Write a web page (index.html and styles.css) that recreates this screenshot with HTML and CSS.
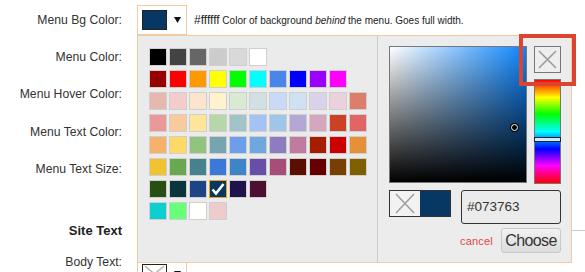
FILE: index.html
```html
<!DOCTYPE html>
<html>
<head>
  <title>Menu Settings</title>
  <link rel="stylesheet" href="styles.css">
</head>
<body>
  <div class="settings">

    <div class="row rowBg">
      <div class="lbl">Menu Bg Color:</div>
      <div class="field">
        <div class="colorBtn">
          <span class="btnSwatch" style="background:#073763"></span>
          <svg class="caret" width="7" height="6" viewBox="0 0 7 6"><polygon points="0,0 7,0 3.5,6" fill="#111"/></svg>
        </div>
        <span class="desc"><span class="hex">#ffffff</span> Color of background <em>behind</em> the menu. Goes full width.</span>

        <!-- color picker dropdown -->
        <div class="picker">
          <div class="palette">
            <div class="palRow">
              <span class="sw" style="background:#000000"></span>
              <span class="sw" style="background:#434343"></span>
              <span class="sw" style="background:#666666"></span>
              <span class="sw" style="background:#cccccc"></span>
              <span class="sw" style="background:#d9d9d9"></span>
              <span class="sw" style="background:#ffffff"></span>
            </div>
            <div class="palRow">
              <span class="sw" style="background:#980000"></span>
              <span class="sw" style="background:#ff0000"></span>
              <span class="sw" style="background:#ff9900"></span>
              <span class="sw" style="background:#ffff00"></span>
              <span class="sw" style="background:#00ff00"></span>
              <span class="sw" style="background:#00ffff"></span>
              <span class="sw" style="background:#4a86e8"></span>
              <span class="sw" style="background:#0000ff"></span>
              <span class="sw" style="background:#9900ff"></span>
              <span class="sw" style="background:#ff00ff"></span>
            </div>
            <div class="palRow">
              <span class="sw" style="background:#e6b8af"></span>
              <span class="sw" style="background:#f4cccc"></span>
              <span class="sw" style="background:#fce5cd"></span>
              <span class="sw" style="background:#fff2cc"></span>
              <span class="sw" style="background:#d9ead3"></span>
              <span class="sw" style="background:#d0e0e3"></span>
              <span class="sw" style="background:#c9daf8"></span>
              <span class="sw" style="background:#cfe2f3"></span>
              <span class="sw" style="background:#d9d2e9"></span>
              <span class="sw" style="background:#ead1dc"></span>
              <span class="sw" style="background:#dd7e6b"></span>
            </div>
            <div class="palRow">
              <span class="sw" style="background:#ea9999"></span>
              <span class="sw" style="background:#f9cb9c"></span>
              <span class="sw" style="background:#ffe599"></span>
              <span class="sw" style="background:#b6d7a8"></span>
              <span class="sw" style="background:#a2c4c9"></span>
              <span class="sw" style="background:#a4c2f4"></span>
              <span class="sw" style="background:#9fc5e8"></span>
              <span class="sw" style="background:#b4a7d6"></span>
              <span class="sw" style="background:#d5a6bd"></span>
              <span class="sw" style="background:#cc4125"></span>
              <span class="sw" style="background:#e06666"></span>
            </div>
            <div class="palRow">
              <span class="sw" style="background:#f6b26b"></span>
              <span class="sw" style="background:#ffd966"></span>
              <span class="sw" style="background:#93c47d"></span>
              <span class="sw" style="background:#76a5af"></span>
              <span class="sw" style="background:#6d9eeb"></span>
              <span class="sw" style="background:#6fa8dc"></span>
              <span class="sw" style="background:#8e7cc3"></span>
              <span class="sw" style="background:#c27ba0"></span>
              <span class="sw" style="background:#a61c00"></span>
              <span class="sw" style="background:#cc0000"></span>
              <span class="sw" style="background:#e69138"></span>
            </div>
            <div class="palRow">
              <span class="sw" style="background:#f1c232"></span>
              <span class="sw" style="background:#6aa84f"></span>
              <span class="sw" style="background:#45818e"></span>
              <span class="sw" style="background:#3c78d8"></span>
              <span class="sw" style="background:#3d85c6"></span>
              <span class="sw" style="background:#674ea7"></span>
              <span class="sw" style="background:#a64d79"></span>
              <span class="sw" style="background:#5b0f00"></span>
              <span class="sw" style="background:#660000"></span>
              <span class="sw" style="background:#783f04"></span>
              <span class="sw" style="background:#7f6000"></span>
            </div>
            <div class="palRow">
              <span class="sw" style="background:#274e13"></span>
              <span class="sw" style="background:#0c343d"></span>
              <span class="sw" style="background:#1c4587"></span>
              <span class="sw selected" style="background:#073763">
                <svg width="16" height="16" viewBox="0 0 16 16"><polyline points="2.5,8.5 6,12.5 13.5,3" fill="none" stroke="#fff" stroke-width="2.6"/></svg>
              </span>
              <span class="sw" style="background:#20124d"></span>
              <span class="sw" style="background:#4c1130"></span>
            </div>
            <div class="palRow">
              <span class="sw" style="background:#0ccfcf"></span>
              <span class="sw" style="background:#66ff77"></span>
              <span class="sw" style="background:#fffffe"></span>
              <span class="sw" style="background:#efcccc"></span>
            </div>
          </div>

          <div class="chooser">
            <div class="pickTop">
              <div class="gradBox">
                <span class="dragger"></span>
              </div>
              <div class="sideCol">
                <div class="clearBtn">
                  <svg width="25" height="25" viewBox="0 0 25 25"><path d="M4 4 L21 21 M21 4 L4 21" stroke="#9a9a9a" stroke-width="1.6"/></svg>
                </div>
                <div class="hueBar">
                  <span class="hueHandle"></span>
                </div>
              </div>
            </div>
            <div class="pickMid">
              <div class="preview">
                <span class="prevOld">
                  <svg width="30" height="25" viewBox="0 0 30 25"><path d="M6 3 L24 22 M24 3 L6 22" stroke="#a0a0a0" stroke-width="1.6"/></svg>
                </span>
                <span class="prevNew"></span>
              </div>
              <div class="hexInput">#073763</div>
            </div>
            <div class="pickActions">
              <a class="cancel">cancel</a>
              <button class="choose">Choose</button>
            </div>
          </div>
        </div>
      </div>
    </div>

    <div class="row rowFirst">
      <div class="lbl">Menu Color:</div>
      <div class="field"></div>
    </div>
    <div class="row">
      <div class="lbl">Menu Hover Color:</div>
      <div class="field"></div>
    </div>
    <div class="row">
      <div class="lbl">Menu Text Color:</div>
      <div class="field"></div>
    </div>
    <div class="row">
      <div class="lbl">Menu Text Size:</div>
      <div class="field"></div>
    </div>

    <div class="row section">
      <div class="lbl heading">Site Text</div>
      <div class="field"><div class="rule"></div></div>
    </div>

    <div class="row rowLast">
      <div class="lbl">Body Text:</div>
      <div class="field">
        <div class="colorBtn">
          <span class="btnSwatch none">
            <svg width="23" height="18" viewBox="0 0 23 18"><path d="M2 1 L21 17 M21 1 L2 17" stroke="#b0b0b0" stroke-width="1.5"/></svg>
          </span>
          <svg class="caret" width="7" height="6" viewBox="0 0 7 6"><polygon points="0,0 7,0 3.5,6" fill="#111"/></svg>
        </div>
      </div>
    </div>
  </div>

  <div class="callout"></div>
</body>
</html>
```

FILE: styles.css
```css
body {
  margin: 0;
  font-family: "Liberation Sans", Arial, sans-serif;
  color: #333;
  background: #fff;
  overflow: hidden;
}

.settings {
  padding-top: 5px;
}

.row {
  display: grid;
  grid-template-columns: 122px 1fr;
  column-gap: 15px;
  align-items: center;
  height: 37.5px;
}

.rowBg {
  height: 30px;
}

.rowFirst {
  margin-top: 3px;
}

.lbl {
  text-align: right;
  font-size: 12.2px;
  white-space: nowrap;
}

.heading {
  font-weight: bold;
  font-size: 13px;
  color: #222;
}

.section {
  margin-top: 24px;
  height: 36px;
}

.rowLast {
  align-items: start;
}
.rowLast .lbl {
  line-height: 28px;
}
.rowLast .colorBtn {
  margin-top: 11px;
}

.field {
  position: relative;
  display: flex;
  align-items: center;
  height: 100%;
}

.colorBtn {
  box-sizing: border-box;
  width: 50px;
  height: 30px;
  border: 1px solid #f2c9a0;
  background: #fff;
  display: flex;
  align-items: center;
  padding-left: 4px;
  flex-shrink: 0;
}

.btnSwatch {
  box-sizing: border-box;
  width: 25px;
  height: 20px;
  border: 1px solid #222;
  display: block;
}
.btnSwatch.none {
  background: #fff;
}
.btnSwatch svg {
  display: block;
}

.caret {
  margin-left: 7px;
}

.desc {
  margin-left: 7px;
  font-size: 10px;
  color: #222;
  white-space: nowrap;
}
.hex {
  font-size: 12px;
}

.rule {
  width: 100%;
  height: 1px;
  background: #ccc;
}

/* dropdown */
.picker {
  position: absolute;
  left: 0;
  top: 30px;
  z-index: 10;
  box-sizing: border-box;
  width: 435px;
  height: 228px;
  border: 1px solid #f2c9a0;
  background: #ebebeb;
  display: flex;
}

.palette {
  box-sizing: border-box;
  width: 241px;
  border-right: 1px solid #c9c9c9;
  padding: 12px 0 0 11px;
  display: flex;
  flex-direction: column;
  gap: 4px;
}

.palRow {
  display: flex;
  gap: 2px;
}

.sw {
  box-sizing: border-box;
  width: 18px;
  height: 18px;
  border: 1px solid #cfcfcf;
  display: block;
}
.sw.selected {
  border-color: #f0a30a;
}
.sw svg {
  display: block;
}

.chooser {
  flex: 1;
  padding: 10px 10px 0 11px;
  background: #ececec;
}

.pickTop {
  display: flex;
  gap: 7px;
}

.gradBox {
  position: relative;
  box-sizing: border-box;
  width: 138px;
  height: 137px;
  border: 1px solid #777;
  background:
    linear-gradient(to top, #000, rgba(0,0,0,0)),
    linear-gradient(to right, #fff, #0d86ff);
}

.dragger {
  position: absolute;
  left: 121px;
  top: 77px;
  box-sizing: border-box;
  width: 7px;
  height: 7px;
  border-radius: 50%;
  background: #000;
  border: 1px solid #fff;
  box-shadow: 0 0 0 1px #000;
}

.sideCol {
  width: 27px;
  display: flex;
  flex-direction: column;
  gap: 6px;
}

.clearBtn {
  box-sizing: border-box;
  width: 27px;
  height: 27px;
  border: 1px solid #777;
  background: #eee;
}
.clearBtn svg {
  display: block;
}

.hueBar {
  position: relative;
  box-sizing: border-box;
  height: 105px;
  border: 1px solid #777;
  background: linear-gradient(to bottom, #f00 0%, #ff0 17%, #0f0 33%, #0ff 50%, #00f 67%, #f0f 83%, #f00 100%);
}

.hueHandle {
  position: absolute;
  left: -1px;
  right: -1px;
  top: 57px;
  height: 5px;
  box-sizing: border-box;
  border: 1px solid #222;
  background: #cfe9ff;
}

.pickMid {
  display: flex;
  align-items: flex-start;
  gap: 10px;
  margin-top: 6px;
}

.preview {
  box-sizing: border-box;
  width: 62px;
  height: 27px;
  border: 1px solid #333;
  display: flex;
}
.prevOld {
  width: 30px;
  background: #f2f2f2;
}
.prevOld svg {
  display: block;
}
.prevNew {
  flex: 1;
  background: #073763;
}

.hexInput {
  box-sizing: border-box;
  width: 100px;
  height: 34px;
  border: 1px solid #333;
  border-radius: 3px;
  background: #ebebeb;
  font-size: 13.5px;
  line-height: 32px;
  padding-left: 5px;
  color: #333;
}

.pickActions {
  display: flex;
  justify-content: flex-end;
  align-items: center;
  gap: 8px;
  margin-top: 4px;
}

.cancel {
  font-size: 11px;
  color: #e04848;
  letter-spacing: 0.2px;
}

.choose {
  box-sizing: border-box;
  width: 60px;
  height: 25px;
  padding: 0;
  border: 1px solid #c8c8c8;
  border-radius: 3px;
  background: linear-gradient(#f2f2f2, #dcdcdc);
  font-family: "Liberation Sans", Arial, sans-serif;
  font-size: 16px;
  letter-spacing: -0.6px;
  color: #333;
}

/* annotation box round the clear button */
.callout {
  position: absolute;
  left: 519px;
  top: 34px;
  box-sizing: border-box;
  width: 57px;
  height: 52px;
  border: 4px solid #db4431;
  z-index: 20;
}
```
